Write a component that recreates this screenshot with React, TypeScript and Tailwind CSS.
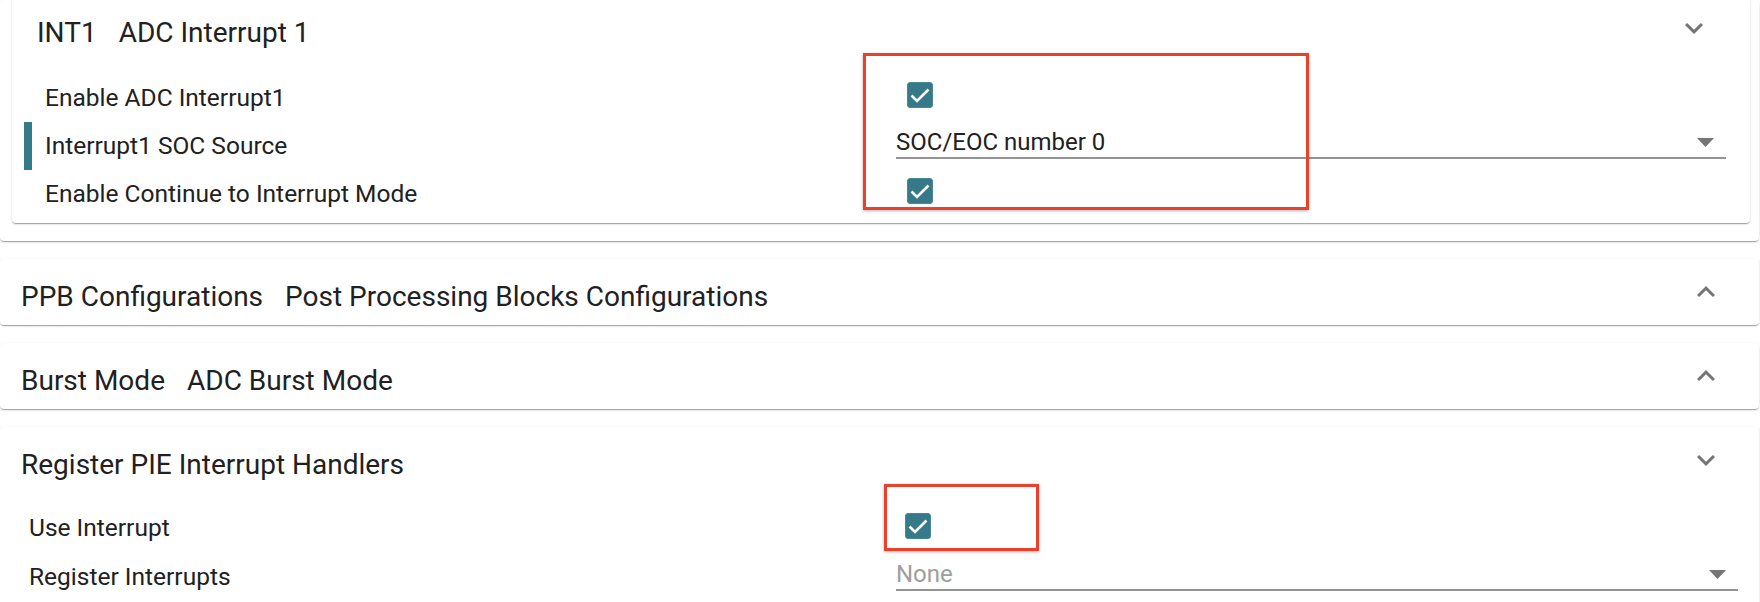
import * as React from "react";

const CARD =
  "bg-white rounded-[4px] shadow-[0_2px_1px_-1px_rgba(0,0,0,0.2),0_1px_1px_0_rgba(0,0,0,0.14),0_1px_3px_0_rgba(0,0,0,0.12)]";

function Chevron({ up = false }: { up?: boolean }) {
  return (
    <svg width="36" height="36" viewBox="0 0 24 24" className={up ? "rotate-180" : ""}>
      <path d="M16.59 8.59L12 13.17 7.41 8.59 6 10l6 6 6-6z" fill="#757575" />
    </svg>
  );
}

function Check({ className = "" }: { className?: string }) {
  return (
    <div className={`flex h-[26px] w-[26px] items-center justify-center rounded-[3px] border border-[#4a8896] bg-[#347a89] ${className}`}>
      <svg width="24" height="24" viewBox="0 0 24 24">
        <polyline points="3.5,12.5 9,18 20.5,6.5" fill="none" stroke="#ffffff" strokeWidth="2.6" />
      </svg>
    </div>
  );
}

function Select({ value, muted = false, className = "" }: { value: string; muted?: boolean; className?: string }) {
  return (
    <div className={`flex h-[31px] flex-1 items-start justify-between border-b-2 border-[#949494] ${className}`}>
      <span className={`text-[24px] leading-[28px] ${muted ? "text-[#9e9e9e]" : "text-[#212121]"}`}>{value}</span>
      <div className="mr-[12px] flex h-[28px] items-center">
        <svg width="17" height="9" viewBox="0 0 17 9">
          <polygon points="0,0 17,0 8.5,9" fill="#757575" />
        </svg>
      </div>
    </div>
  );
}

function Header({ title, sub, up, pl, pr }: { title: string; sub?: string; up?: boolean; pl: string; pr: string }) {
  return (
    <div className={`flex h-[66px] items-start justify-between ${pl} ${pr}`}>
      <div className="flex gap-[22px] pt-[24px] text-[28px] leading-[28px] text-[#212121]">
        <span>{title}</span>
        {sub && <span>{sub}</span>}
      </div>
      <div className="pt-[15px]">
        <Chevron up={up} />
      </div>
    </div>
  );
}

export default function App() {
  return (
    <div
      className="relative h-[602px] w-[1760px] overflow-hidden bg-white"
      style={{ fontFamily: "Roboto, 'Noto Sans', sans-serif" }}
    >
      <div className="flex flex-col gap-[18px] pr-px">
        {/* expanded group containing INT1 */}
        <div className={`${CARD} pb-[18px] pl-3 pr-[9px]`}>
          <div className={`${CARD} -mt-[5px] pb-[5px]`}>
            <Header title="INT1" sub="ADC Interrupt 1" pl="pl-[25px]" pr="pr-[38px]" />
            <div className="flex flex-col pl-3 pr-6 pt-[13px] text-[24.5px] text-[#212121]">
              <div className="flex h-12 items-center">
                <div className="w-2 self-stretch" />
                <div className="ml-[13px] w-[851px]">Enable ADC Interrupt1</div>
                <Check className="mb-[6px] ml-[11px]" />
              </div>
              <div className="flex h-12 items-center">
                <div className="w-2 self-stretch bg-[#347a89]" />
                <div className="ml-[13px] w-[851px]">Interrupt1 SOC Source</div>
                <Select value="SOC/EOC number 0" className="mb-[5px]" />
              </div>
              <div className="flex h-12 items-center">
                <div className="w-2 self-stretch" />
                <div className="ml-[13px] w-[851px]">Enable Continue to Interrupt Mode</div>
                <Check className="mb-[6px] ml-[11px]" />
              </div>
            </div>
          </div>
        </div>

        <div className={CARD}>
          <Header title="PPB Configurations" sub="Post Processing Blocks Configurations" up pl="pl-[21px]" pr="pr-[35px]" />
        </div>

        <div className={CARD}>
          <Header title="Burst Mode" sub="ADC Burst Mode" up pl="pl-[21px]" pr="pr-[35px]" />
        </div>

        <div className={`${CARD} pb-4`}>
          <Header title="Register PIE Interrupt Handlers" pl="pl-[21px]" pr="pr-[35px]" />
          <div className="flex flex-col pl-[29px] pr-[21px] pt-[11px] text-[24.5px] text-[#212121]">
            <div className="flex h-[49px] items-center">
              <div className="w-[867px]">Use Interrupt</div>
              <Check className="mb-[5px] ml-[9px]" />
            </div>
            <div className="flex h-[49px] items-center">
              <div className="w-[867px]">Register Interrupts</div>
              <Select value="None" muted className="mb-[4px]" />
            </div>
          </div>
        </div>
      </div>

      {/* annotation boxes */}
      <div className="absolute left-[863px] top-[53px] h-[157px] w-[446px] border-[3px] border-[#e8412c] shadow-[0_1px_3px_rgba(0,0,0,0.3)]" />
      <div className="absolute left-[884px] top-[484px] h-[67px] w-[155px] border-[3px] border-[#e8412c] shadow-[0_1px_3px_rgba(0,0,0,0.3)]" />
    </div>
  );
}
